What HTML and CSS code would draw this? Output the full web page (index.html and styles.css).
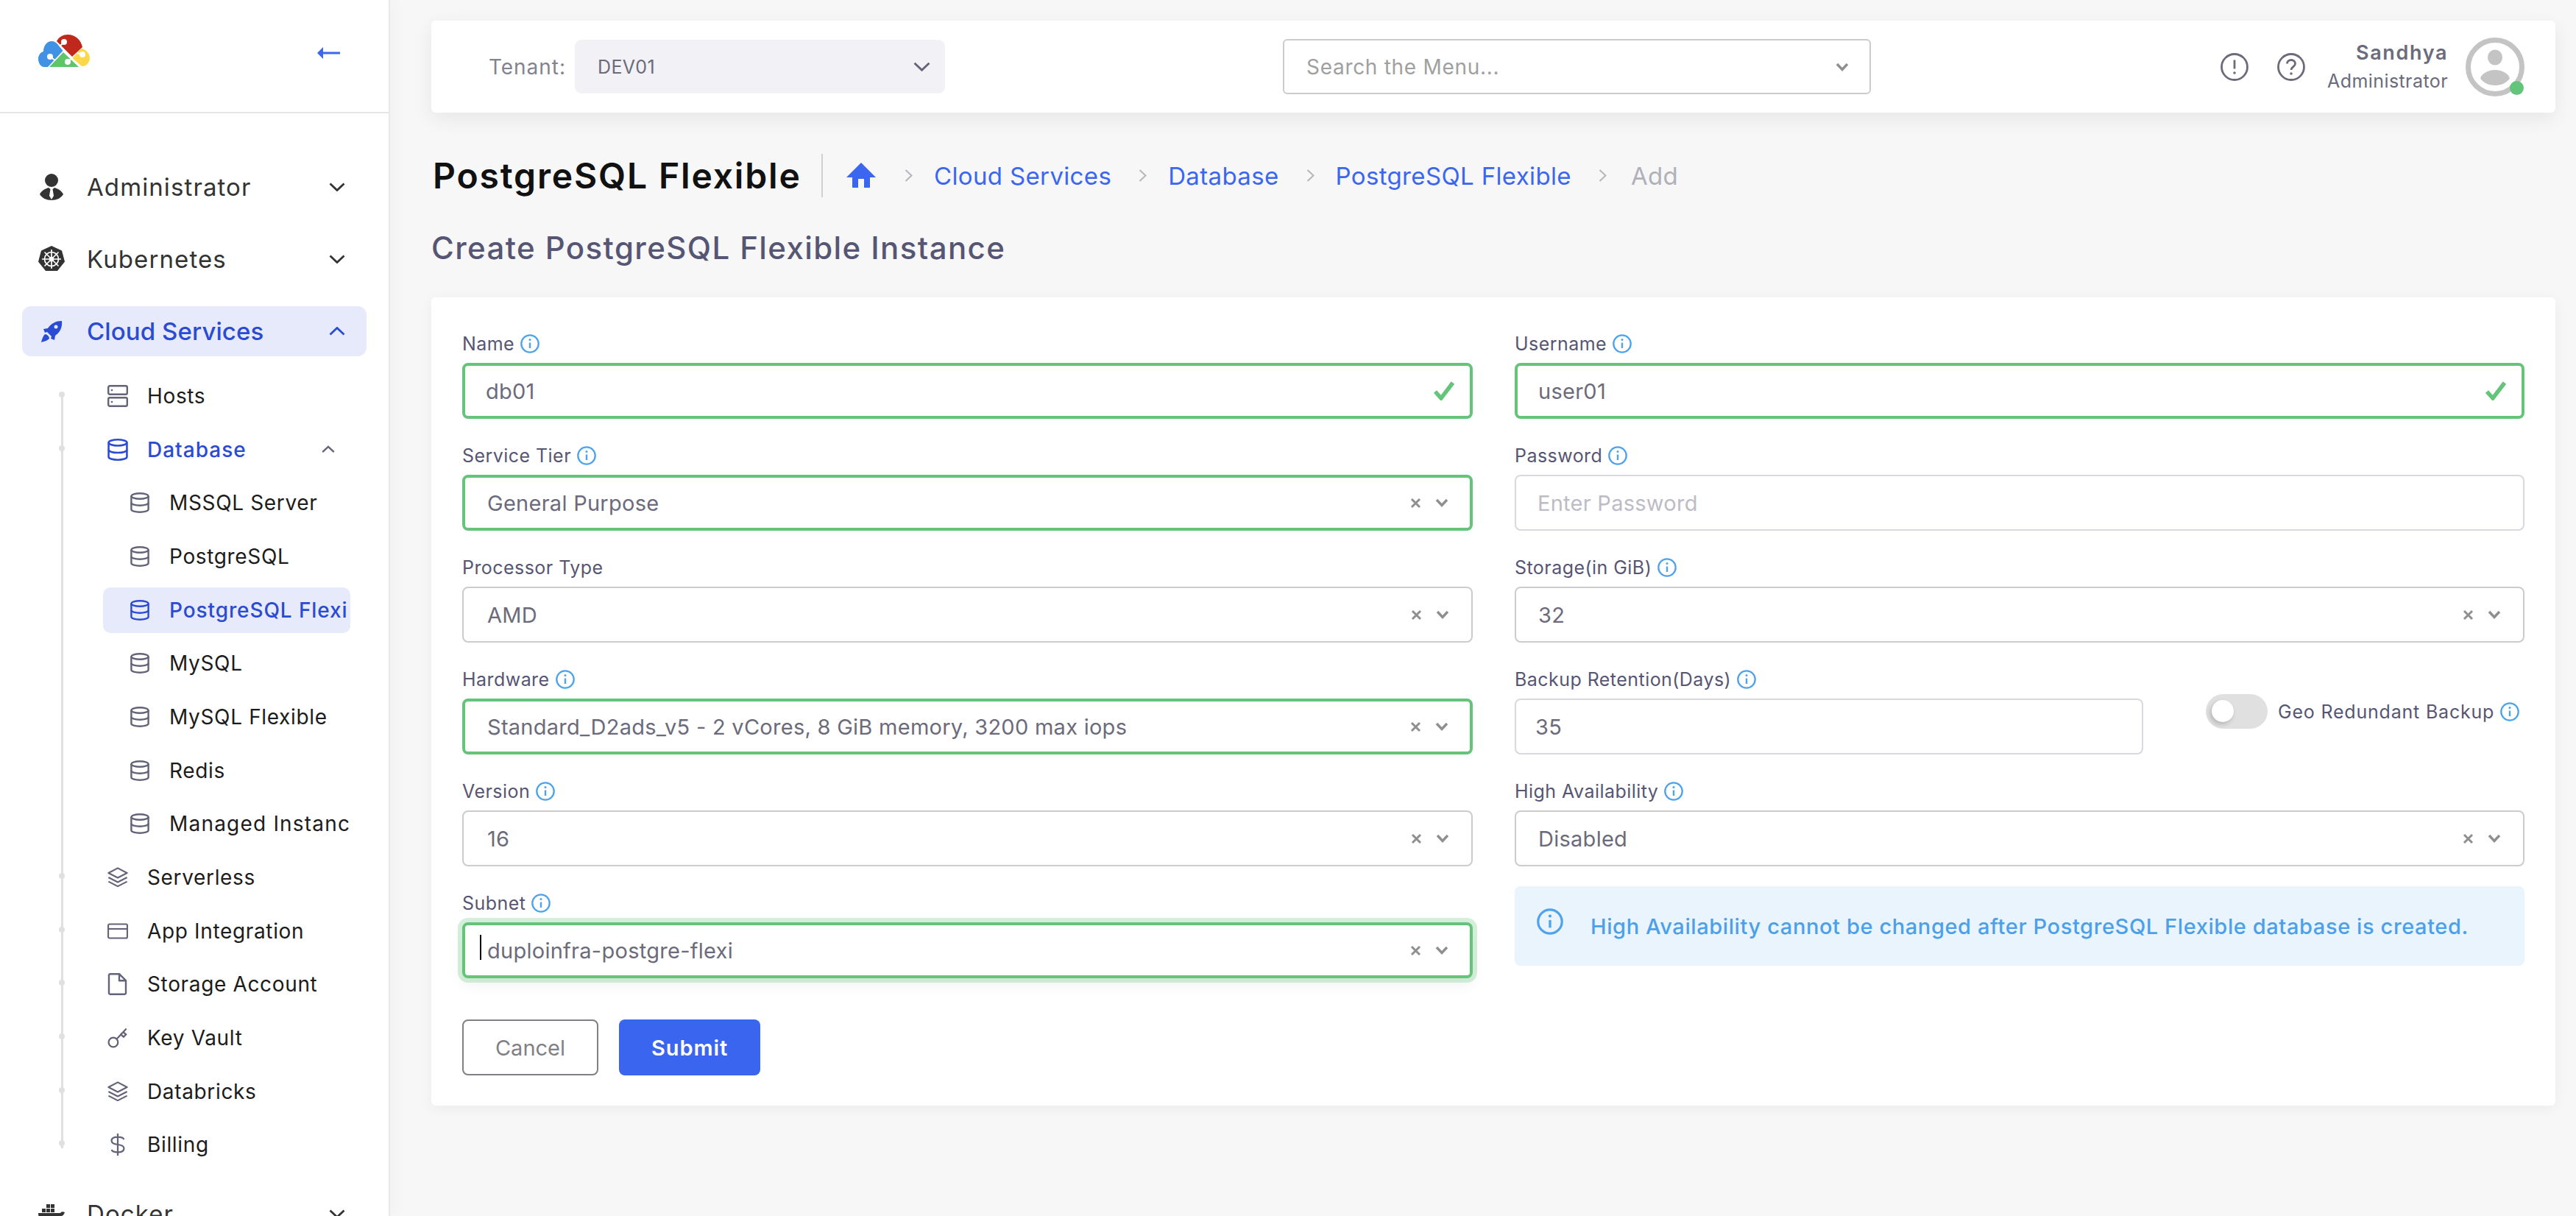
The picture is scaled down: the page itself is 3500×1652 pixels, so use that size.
FILE: index.html
```html
<!DOCTYPE html>
<html lang="en">
<head>
<meta charset="utf-8">
<title>PostgreSQL Flexible</title>
<link rel="stylesheet" href="styles.css">
</head>
<body>
<svg class="sprite" aria-hidden="true">
  <symbol id="i-down" viewBox="0 0 22 12"><path d="M1.500 1.500 11 10.500 20.500 1.500" fill="none" stroke="currentColor" stroke-width="2.800"/></symbol>
  <symbol id="i-up" viewBox="0 0 22 12"><path d="M1.500 10.500 11 1.500 20.500 10.500" fill="none" stroke="currentColor" stroke-width="2.800"/></symbol>
  <symbol id="i-sep" viewBox="0 0 11 17"><path d="M1.500 1 9.500 8.500 1.500 16" fill="none" stroke="currentColor" stroke-width="2"/></symbol>
  <symbol id="i-info" viewBox="0 0 26 26"><circle cx="13" cy="13" r="11.700" fill="none" stroke="currentColor" stroke-width="2.300"/><path d="M13 11.500v7.500" stroke="currentColor" stroke-width="2.400"/><circle cx="13" cy="7.600" r="1.500" fill="currentColor"/></symbol>
  <symbol id="i-db" viewBox="0 0 26 28"><g fill="none" stroke="currentColor" stroke-width="2.400"><ellipse cx="13" cy="5" rx="11.600" ry="3.800"/><path d="M1.400 5v18c0 2.200 5.200 3.800 11.600 3.800s11.600-1.600 11.600-3.800V5"/><path d="M1.400 14c0 2.200 5.200 3.800 11.600 3.800s11.600-1.600 11.600-3.800"/></g></symbol>
  <symbol id="i-layers" viewBox="0 0 30 30"><g fill="none" stroke="currentColor" stroke-width="2.300" stroke-linejoin="round"><path d="M15 1.500 28.500 8.500 15 15.500 1.500 8.500Z"/><path d="M1.500 15 15 22 28.500 15"/><path d="M1.500 21 15 28 28.500 21"/></g></symbol>
  <symbol id="i-close" viewBox="0 0 15 15"><path d="M2 2 13 13M13 2 2 13" fill="none" stroke="currentColor" stroke-width="3"/></symbol>
  <symbol id="i-caret" viewBox="0 0 18 12"><path d="M2 2 9 9.500 16 2" fill="none" stroke="currentColor" stroke-width="3.400"/></symbol>
  <symbol id="i-check" viewBox="0 0 30 26"><path d="M3 14 11 23 27 2" fill="none" stroke="currentColor" stroke-width="5.500"/></symbol>
</svg>

<aside class="sidebar">
  <div class="brand">
    <svg class="logo" viewBox="0 0 70 44" aria-label="Logo">
      <path fill="#4192e5" d="M13 44H8C3 44 0 38 0 33c0-5 3-9 7-10C7 15 12 9 18 9c4 0 7 2 9 5l6.500 8Z"/>
      <path fill="#c0281c" d="M25 9C28 3 34 0 40 0c10 0 18 7 20 17L46 30Z"/>
      <path fill="#5ec569" d="M15 44 34 24 55 44Z"/>
      <path fill="#fbd84a" d="M46.500 32 58 19c7 1 12 7 12 13 0 6-5 11-10 11h-1Z"/>
      <g fill="#fff"><circle cx="16" cy="30" r="4"/><circle cx="35" cy="10" r="4"/><circle cx="40" cy="37" r="4"/><circle cx="60" cy="27" r="4"/></g>
      <g stroke="#fff" stroke-width="2"><path d="M16 30 23 35M35 10 30 15M40 37 46 32M60 27 53 25"/></g>
    </svg>
    <svg class="back" viewBox="0 0 31 16" aria-label="Collapse"><path fill="#3a66f0" d="M0 8 8 0V6.500H31V9.500H8V16Z"/></svg>
  </div>
  <nav class="nav">
    <a class="nav-item">
      <svg class="nav-icon" viewBox="0 0 36 36"><g fill="#333"><circle cx="18" cy="9" r="9"/><path d="M2 28c2-5 8-8 12-9l2.500 2-1.500 9 3 5 3-5-1.500-9 2.500-2c4 1 10 4 12 9-3 5-9 8-16 8S5 33 2 28Z"/></g></svg>
      <span class="nav-text">Administrator</span>
      <svg class="nav-chev"><use href="#i-down"/></svg>
    </a>
    <a class="nav-item">
      <svg class="nav-icon" viewBox="0 0 36 36"><path fill="#333" d="M18 0 32 6.500 36 21.500 26 34H10L0 21.500 4 6.500Z"/><g fill="none" stroke="#fff" stroke-width="1.700"><circle cx="18" cy="18" r="9.500"/><circle cx="18" cy="18" r="2.500"/><path d="M18 5v26M5 18h26M8.500 8.500l19 19M27.500 8.500l-19 19"/></g></svg>
      <span class="nav-text">Kubernetes</span>
      <svg class="nav-chev"><use href="#i-down"/></svg>
    </a>
    <a class="nav-item is-active">
      <svg class="nav-icon" viewBox="0 0 36 36"><path fill="#2a4bd3" d="M32 4c1 8-2 15-9 20l-1 6-5-2 1-3-6-6-3 1-2-5 6-1C18 7 24 4 32 4Z"/><path fill="#2a4bd3" d="M9 22c3 0 6 3 6 6-2 2-6 4-11 5 1-5 3-9 5-11Z"/><circle cx="24" cy="12" r="2.500" fill="#e7eafa"/></svg>
      <span class="nav-text">Cloud Services</span>
      <svg class="nav-chev"><use href="#i-up"/></svg>
    </a>
    <ul class="sub-list">
      <li class="sub-item">
        <svg class="sub-icon" viewBox="0 0 28 30"><g fill="none" stroke="currentColor" stroke-width="2.400"><rect x="1.200" y="1.200" width="25.600" height="11.500" rx="2"/><rect x="1.200" y="17.300" width="25.600" height="11.500" rx="2"/></g><circle cx="6" cy="7" r="1.300" fill="currentColor"/><circle cx="6" cy="23" r="1.300" fill="currentColor"/></svg>
        <span class="sub-text">Hosts</span>
      </li>
      <li class="sub-item is-open">
        <svg class="sub-icon"><use href="#i-db"/></svg>
        <span class="sub-text">Database</span>
        <svg class="sub-chev"><use href="#i-up"/></svg>
      </li>
      <li class="leaf"><svg class="leaf-icon"><use href="#i-db"/></svg><span class="sub-text">MSSQL Server</span></li>
      <li class="leaf"><svg class="leaf-icon"><use href="#i-db"/></svg><span class="sub-text">PostgreSQL</span></li>
      <li class="leaf is-current"><svg class="leaf-icon"><use href="#i-db"/></svg><span class="sub-text">PostgreSQL Flexi</span></li>
      <li class="leaf"><svg class="leaf-icon"><use href="#i-db"/></svg><span class="sub-text">MySQL</span></li>
      <li class="leaf"><svg class="leaf-icon"><use href="#i-db"/></svg><span class="sub-text">MySQL Flexible</span></li>
      <li class="leaf"><svg class="leaf-icon"><use href="#i-db"/></svg><span class="sub-text">Redis</span></li>
      <li class="leaf is-clipped"><svg class="leaf-icon"><use href="#i-db"/></svg><span class="sub-text">Managed Instanc</span></li>
      <li class="sub-item"><svg class="sub-icon"><use href="#i-layers"/></svg><span class="sub-text">Serverless</span></li>
      <li class="sub-item">
        <svg class="sub-icon" viewBox="0 0 32 24"><g fill="none" stroke="currentColor" stroke-width="2.400"><rect x="1.200" y="1.200" width="29.600" height="21.600" rx="2"/><path d="M1.200 8.500h29.600"/></g></svg>
        <span class="sub-text">App Integration</span>
      </li>
      <li class="sub-item">
        <svg class="sub-icon" viewBox="0 0 28 30"><path fill="none" stroke="currentColor" stroke-width="2.400" stroke-linejoin="round" d="M3 1.200h13l9 9v17a1.500 1.500 0 0 1-1.500 1.500h-20A1.500 1.500 0 0 1 2 27.200V2.500ZM16 1.200v9h9"/></svg>
        <span class="sub-text">Storage Account</span>
      </li>
      <li class="sub-item">
        <svg class="sub-icon" viewBox="0 0 30 30"><g fill="none" stroke="currentColor" stroke-width="2.400"><circle cx="8.500" cy="21.500" r="6.800"/><path d="M13.500 16.500 27.500 1.500M19.500 10l3.500-3.500 4 3.500-3.500 3.500Z"/></g></svg>
        <span class="sub-text">Key Vault</span>
      </li>
      <li class="sub-item"><svg class="sub-icon"><use href="#i-layers"/></svg><span class="sub-text">Databricks</span></li>
      <li class="sub-item">
        <svg class="sub-icon" viewBox="0 0 28 32"><path fill="none" stroke="currentColor" stroke-width="2.400" d="M14 0v32M23 8.500c-1-2.500-4-3.500-9-3.500-5 0-9 1.500-9 5.500s4 5 9 5.500 9 1.500 9 5.500-4 5.500-9 5.500c-5 0-8-1-9-3.500"/></svg>
        <span class="sub-text">Billing</span>
      </li>
    </ul>
    <a class="nav-item nav-item-last">
      <svg class="nav-icon" viewBox="0 0 36 36"><g fill="#333"><path d="M0 17h30c1-2 4-2 6-1-1 3-3 5-5 5-3 6-8 9-15 9H5c-3-3-5-8-5-13Z"/><rect x="5" y="11" width="5" height="5"/><rect x="11" y="11" width="5" height="5"/><rect x="17" y="11" width="5" height="5"/><rect x="11" y="5" width="5" height="5"/><rect x="17" y="5" width="5" height="5"/></g></svg>
      <span class="nav-text">Docker</span>
      <svg class="nav-chev"><use href="#i-down"/></svg>
    </a>
  </nav>
</aside>

<main class="main">
  <header class="topbar">
    <span class="tenant-label">Tenant:</span>
    <div class="tenant-select">
      <span class="tenant-value">DEV01</span>
      <svg class="tenant-chev"><use href="#i-down"/></svg>
    </div>
    <div class="search">
      <span class="search-text">Search the Menu...</span>
      <svg class="caret"><use href="#i-caret"/></svg>
    </div>
    <div class="user-area">
      <svg class="round-icon" viewBox="0 0 38 38"><circle cx="19" cy="19" r="17.500" fill="none" stroke="#6b6b7b" stroke-width="2.800"/><path d="M19 9.500v12" stroke="#6b6b7b" stroke-width="2.800"/><circle cx="19" cy="27" r="1.800" fill="#6b6b7b"/></svg>
      <svg class="round-icon" viewBox="0 0 38 38"><circle cx="19" cy="19" r="17.500" fill="none" stroke="#6b6b7b" stroke-width="2.800"/><path d="M13.500 14.500c0-3 2.500-5 5.500-5s5.500 2 5.500 5c0 4.500-5.500 4-5.500 8.500" fill="none" stroke="#6b6b7b" stroke-width="2.800"/><circle cx="19" cy="28" r="1.800" fill="#6b6b7b"/></svg>
      <div class="user-text">
        <span class="user-name">Sandhya</span>
        <span class="user-role">Administrator</span>
      </div>
      <div class="avatar">
        <svg viewBox="0 0 80 80"><circle cx="40" cy="40" r="36.500" fill="#fff" stroke="#c4c4c4" stroke-width="7"/><ellipse cx="40" cy="27" rx="10" ry="10.500" fill="#c4c4c4"/><path fill="#c4c4c4" d="M20 55c3-7 11-11 20-11s17 4 20 11c-3 6-11 10-20 10s-17-4-20-10Z"/></svg>
        <span class="avatar-dot"></span>
      </div>
    </div>
  </header>

  <div class="page-head">
    <h1 class="title">PostgreSQL Flexible</h1>
    <nav class="crumbs">
      <svg class="home" viewBox="0 0 40 34" aria-label="Home"><path fill="#3a66f0" d="M20 0 40 20H32V34H24V22H16V34H8V20H0Z"/></svg>
      <svg class="sep"><use href="#i-sep"/></svg>
      <a class="crumb">Cloud Services</a>
      <svg class="sep"><use href="#i-sep"/></svg>
      <a class="crumb">Database</a>
      <svg class="sep"><use href="#i-sep"/></svg>
      <a class="crumb">PostgreSQL Flexible</a>
      <svg class="sep"><use href="#i-sep"/></svg>
      <span class="crumb is-last">Add</span>
    </nav>
  </div>
  <h2 class="subtitle">Create PostgreSQL Flexible Instance</h2>

  <section class="card">
    <div class="form-grid">
      <div class="field">
        <div class="label">Name <svg class="info"><use href="#i-info"/></svg></div>
        <div class="control is-valid"><span class="value">db01</span><svg class="check"><use href="#i-check"/></svg></div>
      </div>
      <div class="field">
        <div class="label">Username <svg class="info"><use href="#i-info"/></svg></div>
        <div class="control is-valid"><span class="value">user01</span><svg class="check"><use href="#i-check"/></svg></div>
      </div>
      <div class="field">
        <div class="label">Service Tier <svg class="info"><use href="#i-info"/></svg></div>
        <div class="control is-valid is-select"><span class="value">General Purpose</span><svg class="clear"><use href="#i-close"/></svg><svg class="caret"><use href="#i-caret"/></svg></div>
      </div>
      <div class="field">
        <div class="label">Password <svg class="info"><use href="#i-info"/></svg></div>
        <div class="control is-text"><span class="value is-placeholder">Enter Password</span></div>
      </div>
      <div class="field">
        <div class="label">Processor Type</div>
        <div class="control is-select"><span class="value">AMD</span><svg class="clear"><use href="#i-close"/></svg><svg class="caret"><use href="#i-caret"/></svg></div>
      </div>
      <div class="field">
        <div class="label">Storage(in GiB) <svg class="info"><use href="#i-info"/></svg></div>
        <div class="control is-select is-right"><span class="value">32</span><svg class="clear"><use href="#i-close"/></svg><svg class="caret"><use href="#i-caret"/></svg></div>
      </div>
      <div class="field">
        <div class="label">Hardware <svg class="info"><use href="#i-info"/></svg></div>
        <div class="control is-valid is-select"><span class="value">Standard_D2ads_v5 - 2 vCores, 8 GiB memory, 3200 max iops</span><svg class="clear"><use href="#i-close"/></svg><svg class="caret"><use href="#i-caret"/></svg></div>
      </div>
      <div class="field-split">
        <div class="field">
          <div class="label">Backup Retention(Days) <svg class="info"><use href="#i-info"/></svg></div>
          <div class="control is-text is-num"><span class="value">35</span></div>
        </div>
        <div class="geo">
          <span class="toggle"><span class="knob"></span></span>
          <span class="geo-text">Geo Redundant Backup</span>
          <svg class="info"><use href="#i-info"/></svg>
        </div>
      </div>
      <div class="field">
        <div class="label">Version <svg class="info"><use href="#i-info"/></svg></div>
        <div class="control is-select"><span class="value">16</span><svg class="clear"><use href="#i-close"/></svg><svg class="caret"><use href="#i-caret"/></svg></div>
      </div>
      <div class="field">
        <div class="label">High Availability <svg class="info"><use href="#i-info"/></svg></div>
        <div class="control is-select is-right"><span class="value">Disabled</span><svg class="clear"><use href="#i-close"/></svg><svg class="caret"><use href="#i-caret"/></svg></div>
      </div>
      <div class="field">
        <div class="label">Subnet <svg class="info"><use href="#i-info"/></svg></div>
        <div class="control is-valid is-select is-focus"><span class="text-caret"></span><span class="value">duploinfra-postgre-flexi</span><svg class="clear"><use href="#i-close"/></svg><svg class="caret"><use href="#i-caret"/></svg></div>
      </div>
      <div class="alert">
        <svg class="alert-icon"><use href="#i-info"/></svg>
        <span class="alert-text">High Availability cannot be changed after PostgreSQL Flexible database is created.</span>
      </div>
    </div>
    <div class="actions">
      <button class="btn btn-cancel">Cancel</button>
      <button class="btn btn-submit">Submit</button>
    </div>
  </section>
</main>
</body>
</html>
```
FILE: styles.css
```css
* { box-sizing: border-box; }
html, body { height: 100%; }
body {
  margin: 0;
  display: flex;
  height: 1652px;
  overflow: hidden;
  background: #f7f7f7;
  font-family: Inter, "Noto Sans", sans-serif;
  color: #333;
}
.sprite { display: none; }
svg { display: block; flex: none; }

/* Sidebar */
.sidebar {
  width: 530px;
  flex: none;
  background: #fff;
  border-right: 2px solid #e8e8e8;
  box-shadow: 4px 0 24px rgba(0, 0, 0, .03);
  overflow: hidden;
  height: 1652px;
}
.brand {
  height: 154px;
  padding: 0 66px 14px 52px;
  display: flex;
  align-items: center;
  justify-content: space-between;
  border-bottom: 2px solid #e5e5e5;
}
.logo { width: 70px; height: 44px; }
.back { width: 31px; height: 16px; margin-top: 5px; }
.nav { padding: 66px 30px 0; }
.nav-item {
  display: flex;
  align-items: center;
  height: 68px;
  margin-bottom: 30px;
  padding: 0 29px 0 22px;
  border-radius: 12px;
  color: #333;
}
.nav-icon { width: 36px; height: 36px; margin-right: 30px; }
.nav-text { font-size: 33px; letter-spacing: 1.100px; flex: 1; }
.nav-chev { width: 22px; height: 12px; }
.nav-item.is-active { background: #e7eafa; color: #2a4bd3; margin-bottom: 0; }
.nav-item.is-active .nav-text { font-weight: 500; letter-spacing: .1px; }
.nav-item-last { margin-top: 23px; }

.sub-list {
  list-style: none;
  margin: 17.500px 0 0 -30px;
  padding: 0;
  position: relative;
  display: flex;
  flex-direction: column;
}
.sub-list::before {
  content: "";
  position: absolute;
  left: 83px;
  top: 34px;
  bottom: 32px;
  width: 2.500px;
  background: #e0e0e0;
}
.sub-item {
  position: relative;
  display: flex;
  align-items: center;
  height: 72.700px;
  padding-left: 146px;
  color: #636379;
}
.sub-item::before {
  content: "";
  position: absolute;
  left: 80px;
  top: calc(50% - 6px);
  width: 8px;
  height: 8px;
  border-radius: 50%;
  background: #e0e0e0;
}
.sub-icon { width: 28px; height: 30px; margin-right: 26px; }
.sub-text {
  font-size: 28px;
  letter-spacing: .65px;
  color: #1c1c1c;
  white-space: nowrap;
  overflow: hidden;
}
.sub-item.is-open { color: #2a4bd3; }
.sub-item.is-open .sub-text { color: #2a4bd3; font-weight: 500; letter-spacing: 1px; }
.sub-chev { width: 18px; height: 11px; margin-left: auto; margin-right: 43px; color: #636379; }
.leaf {
  display: flex;
  align-items: center;
  height: 62px;
  margin: 5.350px 0 5.350px 140px;
  width: 336px;
  padding-left: 37px;
  border-radius: 10px;
  color: #636379;
}
.leaf-icon { width: 26px; height: 28px; margin-right: 27px; }
.leaf.is-current { background: #e7eafa; color: #2a4bd3; }
.leaf.is-current .sub-text { color: #2a4bd3; font-weight: 500; letter-spacing: .9px; }
.leaf.is-clipped .sub-text { letter-spacing: 1.200px; }

/* Main column */
.main { flex: 1; min-width: 0; padding: 28px 28px 0 56px; }
.topbar {
  height: 125px;
  display: flex;
  align-items: center;
  padding: 0 42px 0 78px;
  background: #fff;
  border-radius: 6px;
  box-shadow: 0 8px 28px rgba(0, 0, 0, .07);
}
.tenant-label { font-size: 28px; letter-spacing: .950px; color: #83838f; width: 117px; }
.tenant-select {
  width: 503px;
  height: 73px;
  display: flex;
  align-items: center;
  justify-content: space-between;
  padding: 0 20px 0 31px;
  background: #f1f1f6;
  border-radius: 9px;
}
.tenant-value { font-size: 25px; letter-spacing: .4px; color: #6b6b7b; }
.tenant-chev { width: 23px; height: 13px; color: #636379; }
.search {
  width: 799px;
  height: 75px;
  margin-left: 459px;
  display: flex;
  align-items: center;
  justify-content: space-between;
  padding: 0 28px 0 30px;
  border: 2px solid #ccc;
  border-radius: 6px;
}
.search-text { font-size: 28px; letter-spacing: .7px; color: #a0a0a0; }
.caret { width: 18px; height: 12px; color: #8f8f8f; }
.user-area { margin-left: auto; display: flex; align-items: center; }
.round-icon { width: 38px; height: 38px; margin-right: 39px; }
.round-icon + .round-icon { margin-right: 30px; }
.user-text { display: flex; flex-direction: column; align-items: flex-end; margin-right: 24px; color: #6b6b7b; }
.user-name { font-size: 27px; font-weight: 600; letter-spacing: 1.600px; line-height: 38px; }
.user-role { font-size: 25px; letter-spacing: .42px; line-height: 38px; }
.avatar { position: relative; width: 80px; height: 80px; }
.avatar svg { width: 80px; height: 80px; }
.avatar-dot {
  position: absolute;
  right: 1px;
  bottom: 2px;
  width: 19px;
  height: 19px;
  border-radius: 50%;
  background: #63c579;
}

.page-head { display: flex; align-items: center; height: 59px; margin-top: 56px; }
.title {
  margin: 0;
  font-size: 48px;
  font-weight: 600;
  letter-spacing: 1.850px;
  color: #111;
  padding-left: 2px;
  width: 532px;
  white-space: nowrap;
  height: 59px;
  line-height: 59px;
  border-right: 2px solid #d0d0d0;
}
.crumbs { display: flex; align-items: center; padding-left: 32px; }
.home { width: 40px; height: 34px; margin: -2px 2px 0 0; }
.sep { width: 11px; height: 17px; color: #b5b5bb; margin: 0 29px 0 37px; }
.crumb { font-size: 33px; letter-spacing: .35px; color: #3a66f0; white-space: nowrap; }
.crumb.is-last { color: #b0b0b8; margin-left: 4px; }
.subtitle {
  margin: 45px 0 43px;
  font-size: 42px;
  line-height: 48px;
  font-weight: 500;
  letter-spacing: 1.400px;
  color: #565674;
}

/* Form card */
.card {
  height: 1098px;
  padding: 47px 42px 42px;
  background: #fff;
  border-radius: 6px;
  box-shadow: 0 4px 20px rgba(0, 0, 0, .05);
}
.form-grid {
  display: grid;
  grid-template-columns: 1373px 1372px;
  column-gap: 57px;
  row-gap: 34px;
}
.label {
  height: 32px;
  margin-bottom: 10px;
  display: flex;
  align-items: center;
  gap: 8px;
  font-size: 25px;
  letter-spacing: .45px;
  color: #565674;
}
.info { width: 26px; height: 26px; color: #4ea3ec; }
.control {
  height: 76px;
  display: flex;
  align-items: center;
  padding: 0 22px 0 29px;
  border: 2px solid #ccc;
  border-radius: 8px;
  background: #fff;
}
.control.is-text { border-color: #d8d8df; }
.control.is-valid { border: 4px solid #65c47a; padding-left: 28px; }
.is-select.is-valid { padding-left: 30px; }
.is-select { padding-left: 32px; }
.is-select.is-right { padding-left: 30px; }
.control.is-num { padding-left: 26px; }
.control.is-focus {
  position: relative;
  box-shadow: 0 0 0 6px rgba(101, 196, 122, .28), 0 10px 20px rgba(0, 0, 0, .05);
}
.text-caret {
  position: absolute;
  left: 20px;
  top: 13px;
  width: 2px;
  height: 34px;
  background: #000;
}
.value { font-size: 29px; letter-spacing: .27px; color: #6b6b7b; flex: 1; white-space: nowrap; }
.value.is-placeholder { color: #bcbcc6; }
.check { width: 30px; height: 26px; color: #63c579; margin-right: -2px; }
.clear { width: 15px; height: 15px; color: #8f8f8f; margin-right: 19px; }
.is-valid .caret { margin-right: 7px; }
.is-select:not(.is-valid) .caret { margin-right: 8px; }

.field-split { display: flex; }
.field-split .field { width: 854px; }
.geo {
  display: flex;
  align-items: center;
  height: 47px;
  margin: 36px 0 0 85px;
}
.toggle {
  position: relative;
  width: 84px;
  height: 47px;
  border-radius: 24px;
  background: #e0e0e0;
  margin-right: 14px;
}
.knob {
  position: absolute;
  left: 8px;
  top: 8px;
  width: 30px;
  height: 30px;
  border-radius: 50%;
  background: #fff;
  box-shadow: -2px 3px 6px rgba(0, 0, 0, .2);
}
.geo-text { font-size: 25px; letter-spacing: .8px; color: #565674; margin-right: 8px; white-space: nowrap; }

.alert {
  height: 108px;
  margin-top: -7px;
  display: flex;
  align-items: center;
  padding: 0 30px;
  background: #e9f4fd;
  border-radius: 8px;
}
.alert-icon { width: 36px; height: 36px; color: #4ea3ec; margin: -12px 37px 0 0; }
.alert-text { font-size: 29px; font-weight: 500; letter-spacing: .6px; color: #4ca0ea; }

.actions { display: flex; gap: 28px; margin-top: 56px; }
.btn {
  height: 76px;
  border-radius: 8px;
  font-family: inherit;
  font-size: 29px;
}
.btn-cancel { width: 185px; background: #fff; border: 2px solid #808085; color: #808085; }
.btn-submit { width: 192px; background: #3a66ef; border: 0; color: #fff; font-weight: 600; letter-spacing: .9px; }
```
